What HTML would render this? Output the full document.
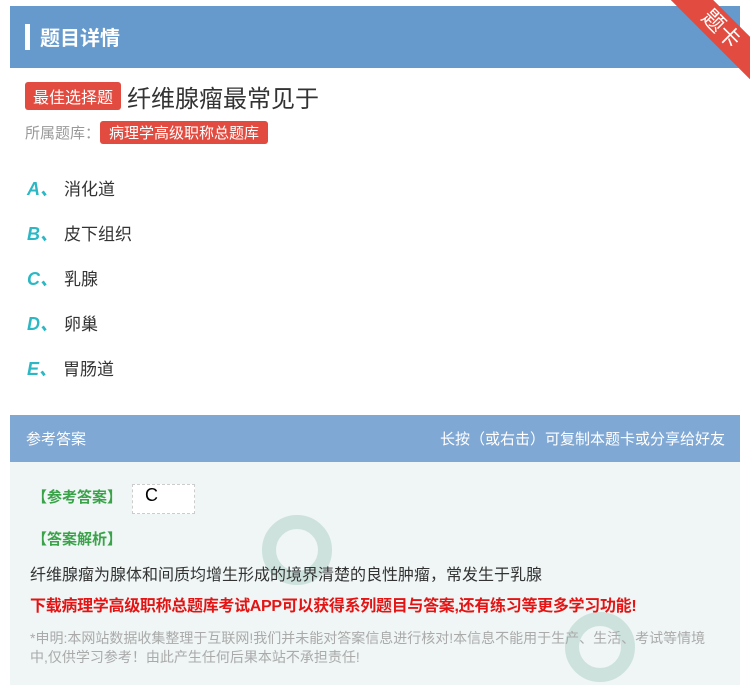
<!DOCTYPE html>
<html><head><meta charset="utf-8"><style>
*{margin:0;padding:0;box-sizing:border-box}
body{width:750px;height:685px;background:#fff;font-family:"Liberation Sans","Noto Sans CJK SC",sans-serif;position:relative;overflow:hidden}
.hdr{position:absolute;left:10px;top:6px;width:730px;height:62px;background:#6699cc}
.hdr .bar{position:absolute;left:15px;top:18px;width:5px;height:26px;background:#fff}
.hdr .t{position:absolute;left:30px;top:16px;color:#fff;font-size:20px;font-weight:bold}
.rib{position:absolute;right:-36px;top:14px;width:130px;height:30px;background:#e24b3f;transform:rotate(45deg);color:#fff;font-size:22px;text-align:center;line-height:30px;transform-origin:center}
.tag{display:inline-block;background:#e24b3f;color:#fff;border-radius:3px}
.q{position:absolute;left:25px;top:79px;font-size:24px;color:#333}
.q .tag{font-size:16px;padding:2px 8px;vertical-align:4px;margin-right:6px}
.lib{position:absolute;left:25px;top:121px;font-size:15px;color:#999}
.lib .tag{font-size:15px;padding:1px 9px}
.opt{position:absolute;left:27px;font-size:17px;color:#333}
.opt b{color:#2bb8c4;font-style:italic;font-size:18px;margin-right:6px}
.ah{position:absolute;left:10px;top:415px;width:730px;height:47px;background:#7fa8d4;color:#fff;font-size:15px}
.ah .l{position:absolute;left:16px;top:13px}
.ah .r{position:absolute;right:15px;top:13px}
.ab{position:absolute;left:10px;top:462px;width:730px;height:223px;background:#eff6f5}
.g{position:absolute;left:32px;color:#3aa34a;font-size:15px;font-weight:bold}
.txt{position:absolute;left:30px;top:561px;font-size:16px;color:#333}
.red{position:absolute;left:30px;top:592px;font-size:16px;color:#e41414;font-weight:bold;letter-spacing:-0.3px}
.note{position:absolute;left:30px;top:629px;width:680px;font-size:14px;color:#aaa;line-height:19px}
.ring{position:absolute;border-radius:50%;border:14px solid #b5d6cc;opacity:.6}
</style></head><body>
<div class="hdr"><div class="bar"></div><div class="t">题目详情</div></div>
<div class="rib">题卡</div>
<div class="q"><span class="tag">最佳选择题</span>纤维腺瘤最常见于</div>
<div class="lib">所属题库：<span class="tag">病理学高级职称总题库</span></div>
<div class="opt" style="top:175px"><b>A、</b>消化道</div>
<div class="opt" style="top:220px"><b>B、</b>皮下组织</div>
<div class="opt" style="top:265px"><b>C、</b>乳腺</div>
<div class="opt" style="top:310px"><b>D、</b>卵巢</div>
<div class="opt" style="top:355px"><b>E、</b>胃肠道</div>
<div class="ah"><span class="l">参考答案</span><span class="r">长按（或右击）可复制本题卡或分享给好友</span></div>
<div class="ab"></div>
<div class="ring" style="left:262px;top:515px;width:70px;height:70px"></div>
<div class="ring" style="left:565px;top:612px;width:70px;height:70px"></div>
<div class="g" style="top:486px">【参考答案】</div>
<div style="position:absolute;left:132px;top:484px;width:63px;height:30px;background:#fff;border:1px dashed #ccc;font-size:18px;padding-left:12px">C</div>
<div class="g" style="top:528px">【答案解析】</div>
<div class="txt">纤维腺瘤为腺体和间质均增生形成的境界清楚的良性肿瘤，常发生于乳腺</div>
<div class="red">下载病理学高级职称总题库考试APP可以获得系列题目与答案,还有练习等更多学习功能!</div>
<div class="note">*申明:本网站数据收集整理于互联网!我们并未能对答案信息进行核对!本信息不能用于生产、生活、考试等情境中,仅供学习参考！由此产生任何后果本站不承担责任!</div>
</body></html>
